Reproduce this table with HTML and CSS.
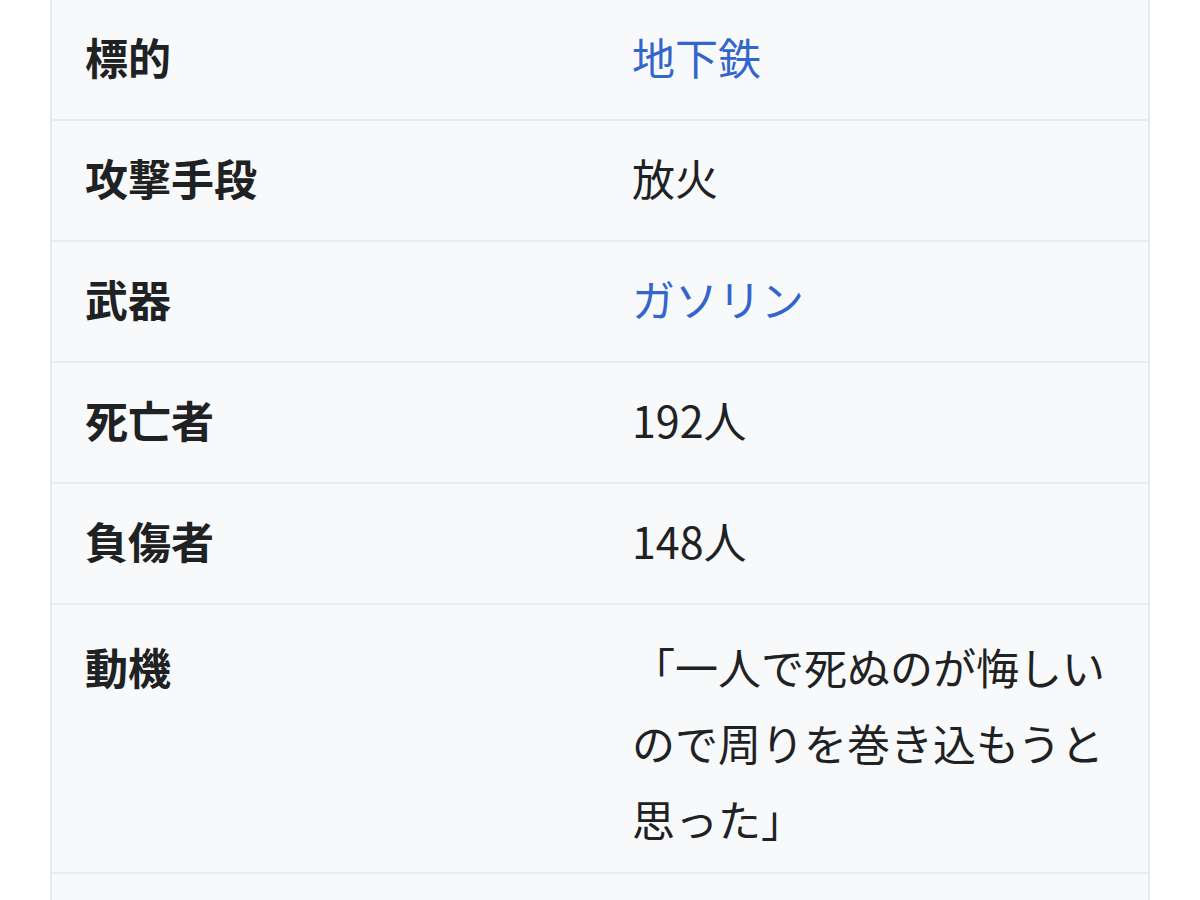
FILE: index.html
```html
<!DOCTYPE html>
<html lang="ja">
<head>
<meta charset="utf-8">
<link rel="stylesheet" href="styles.css">
</head>
<body>
<div class="infobox">
  <div class="row"><div class="label">標的</div><div class="value"><a class="link" href="#">地下鉄</a></div></div>
  <div class="row"><div class="label">攻撃手段</div><div class="value">放火</div></div>
  <div class="row"><div class="label">武器</div><div class="value"><a class="link" href="#">ガソリン</a></div></div>
  <div class="row"><div class="label">死亡者</div><div class="value">192人</div></div>
  <div class="row"><div class="label">負傷者</div><div class="value">148人</div></div>
  <div class="row row-tall"><div class="label">動機</div><div class="value">「一人で死ぬのが悔しいので周りを巻き込もうと思った」</div></div>
  <div class="row"><div class="label">&nbsp;</div><div class="value">&nbsp;</div></div>
</div>
</body>
</html>
```
FILE: styles.css
```css
html, body {
  margin: 0;
  padding: 0;
  background: #ffffff;
}
body {
  font-family: "Noto Sans CJK JP", "Noto Sans", sans-serif;
  color: #202122;
  font-size: 43px;
  line-height: 76px;
}
.infobox {
  margin-left: 50px;
  width: 1100px;
  box-sizing: border-box;
  background: #f8f9fa;
  border-left: 2px solid #e6e8eb;
  border-right: 2px solid #e6e8eb;
}
.row {
  display: grid;
  grid-template-columns: 580px 1fr;
  border-bottom: 2px solid #eaecf0;
}
.label {
  font-weight: 700;
  padding: 18px 0 25px 33px;
}
.value {
  padding: 18px 20px 25px 0;
}
.row-tall .label,
.row-tall .value {
  padding-top: 23px;
  padding-bottom: 16px;
}
.link {
  color: #3366cc;
  text-decoration: none;
}
```
